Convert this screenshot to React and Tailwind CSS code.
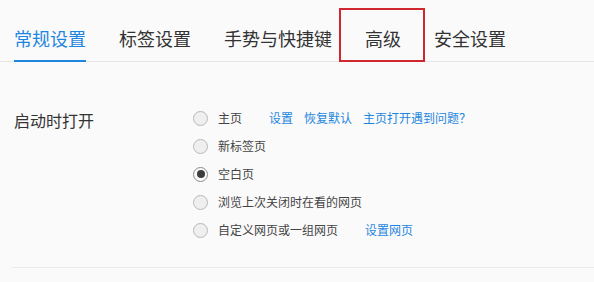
const tabs = [
  { label: "常规设置", active: true },
  { label: "标签设置" },
  { label: "手势与快捷键" },
  { label: "高级", marked: true },
  { label: "安全设置" },
];

const options = [
  { label: "主页", links: ["设置", "恢复默认", "主页打开遇到问题？"] },
  { label: "新标签页" },
  { label: "空白页", checked: true },
  { label: "浏览上次关闭时在看的网页" },
  { label: "自定义网页或一组网页", links: ["设置网页"], gap: true },
];

const Radio = ({ checked }) => (
  <span
    className={`w-[15px] h-[15px] rounded-full border flex items-center justify-center shrink-0 ${
      checked ? "border-[#8a8a8a] bg-[#fbfbfb]" : "border-[#b9b9b9] bg-[#efefef]"
    }`}
  >
    {checked && <span className="w-[8px] h-[8px] rounded-full bg-[#3d3d3d]" />}
  </span>
);

export default function App() {
  return (
    <div
      className="w-[594px] h-[282px] bg-[#fafafa] overflow-hidden"
      style={{ fontFamily: '"Noto Sans CJK SC", "Noto Sans", sans-serif' }}
    >
      {/* Tabs */}
      <nav className="h-[62px] border-b border-[#e6e6e6] flex gap-[33px] pl-[14px]">
        {tabs.map((t) => (
          <div key={t.label} className="relative h-full">
            <span
              className={`block pt-[25px] text-[18px] leading-[27px] ${
                t.active ? "text-[#1f86e0]" : "text-[#333]"
              }`}
            >
              {t.label}
            </span>
            {t.active && (
              <span className="absolute left-0 right-0 -bottom-px h-[2px] bg-[#1f86e0]" />
            )}
            {t.marked && (
              <span className="absolute top-[8px] -bottom-px left-[-26px] right-[-24px] border-2 border-[#d0262e]" />
            )}
          </div>
        ))}
      </nav>

      {/* Startup section */}
      <div className="ml-[12px] mt-[42px] pb-[23px] border-b border-[#ececec] flex">
        <div className="w-[181px] pl-[2px] pt-[2px] text-[16px] leading-[28px] text-[#333]">
          启动时打开
        </div>
        <div className="flex flex-col">
          {options.map((o) => (
            <label key={o.label} className="h-[28px] flex items-center text-[12px] text-[#444]">
              <Radio checked={o.checked} />
              <span className="ml-[10px]">{o.label}</span>
              {o.links && (
                <span className="flex ml-[27px] gap-[11px] text-[#1f86e0]">
                  {o.links.map((l) => (
                    <a key={l} className="cursor-pointer">
                      {l}
                    </a>
                  ))}
                </span>
              )}
            </label>
          ))}
        </div>
      </div>
    </div>
  );
}
